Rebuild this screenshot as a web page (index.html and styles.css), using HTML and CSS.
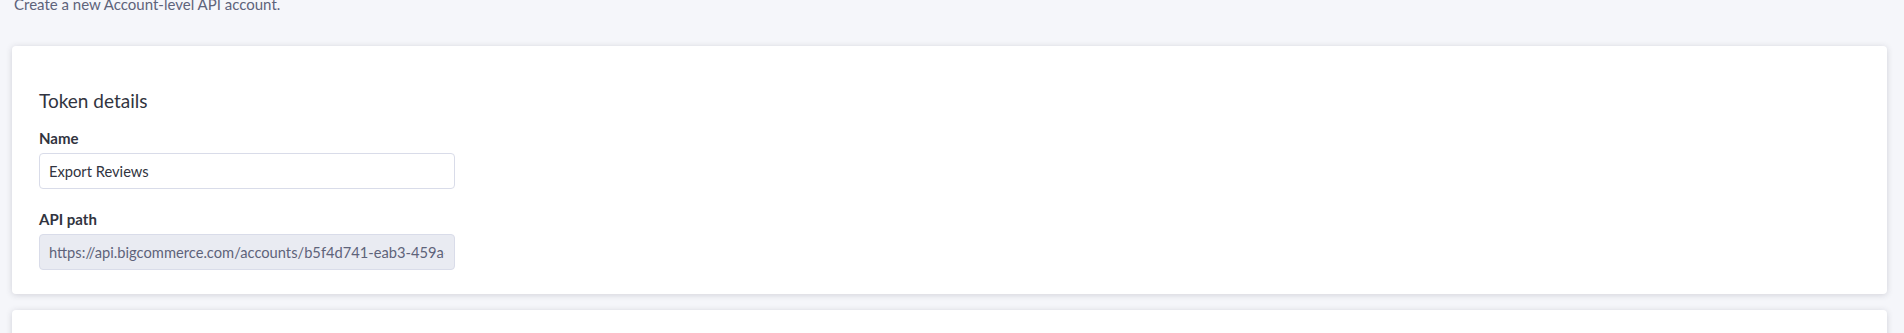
FILE: index.html
```html
<!DOCTYPE html>
<html lang="en">
<head>
    <meta charset="UTF-8">
    <meta name="viewport" content="width=device-width, initial-scale=1.0">
    <title>Create API account</title>
    <link rel="stylesheet" href="styles.css">
</head>
<body>
    <main class="page">
        <p class="page-subtitle">Create a new Account-level API account.</p>

        <section class="panel">
            <h2 class="panel-title">Token details</h2>
            <div class="field">
                <label class="field-label" for="tokenName">Name</label>
                <input class="field-input" type="text" id="tokenName" value="Export Reviews">
            </div>
            <div class="field">
                <label class="field-label" for="apiPath">API path</label>
                <input class="field-input" type="text" id="apiPath" value="https://api.bigcommerce.com/accounts/b5f4d741-eab3-459a-8c1e-6b0f2a7d93c4/" disabled>
            </div>
        </section>

        <section class="panel panel-next"></section>
    </main>
</body>
</html>
```

FILE: styles.css
```css
body {
    margin: 0;
    background-color: #f5f6fa;
    font-family: Lato, "Open Sans", Arial, sans-serif;
    color: #313440;
    overflow: hidden;
}
.page {
    display: flex;
    flex-direction: column;
    gap: 16px;
    padding: 0 17px 0 12px;
}
.page-subtitle {
    margin: -8px 0 14px 2px;
    font-size: 15px;
    line-height: 24px;
    color: #5e637a;
}
.panel {
    background-color: #fff;
    border-radius: 4px;
    box-shadow: 0 1px 6px rgba(49, 52, 64, 0.18);
    padding: 41px 27px 24px;
}
.panel-next {
    height: 80px;
    padding: 0;
}
.panel-title {
    margin: 0 0 13px;
    font-size: 19px;
    font-weight: 400;
    line-height: 28px;
    color: #313440;
}
.field {
    display: flex;
    flex-direction: column;
    gap: 5px;
    width: 416px;
}
.field + .field {
    margin-top: 20px;
}
.field-label {
    font-size: 15px;
    font-weight: 700;
    line-height: 20px;
}
.field-input {
    box-sizing: border-box;
    height: 36px;
    padding: 0 9px;
    border: 1px solid #d9dce9;
    border-radius: 4px;
    background-color: #fff;
    font-family: inherit;
    font-size: 14.7px;
    color: #313440;
    outline: none;
}
.field-input:disabled {
    background-color: #e9ebf2;
    color: #5e637a;
}
```
